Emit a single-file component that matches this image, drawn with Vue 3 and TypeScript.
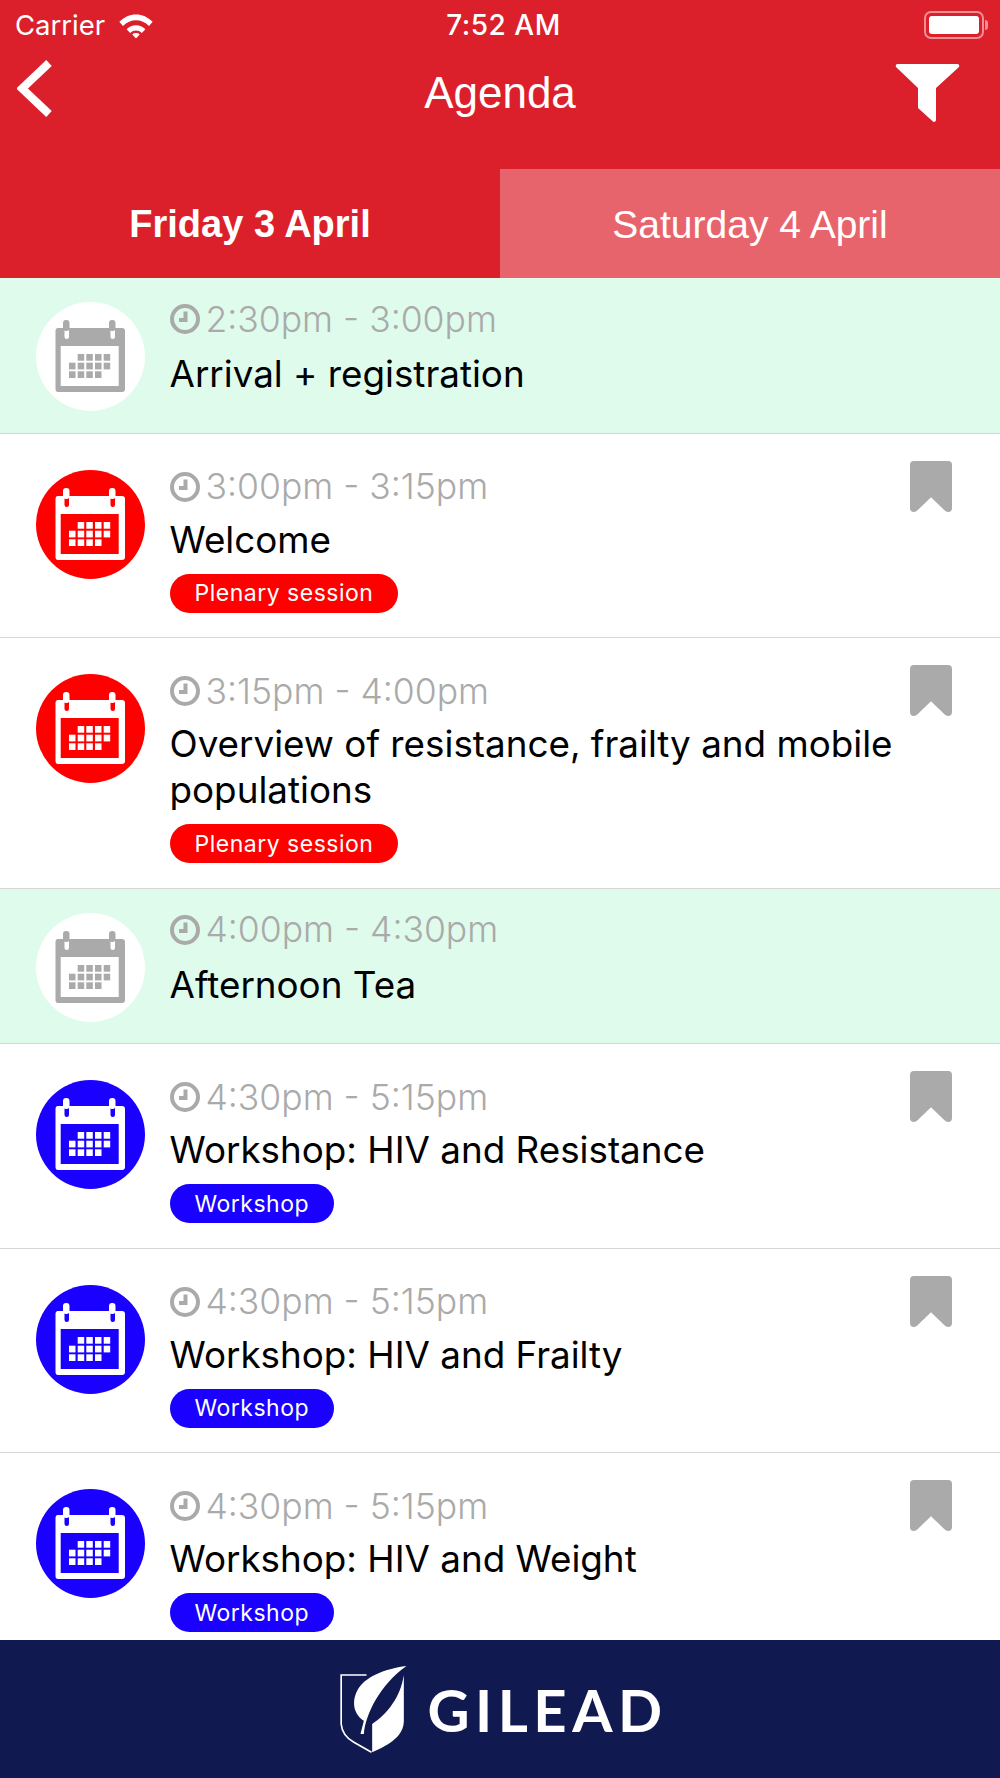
<template>
  <div class="screen">
    <header class="header">
      <div class="status">
        <div class="status-left">
          <span>Carrier</span>
          <svg class="wifi" viewBox="0 0 34 24">
            <path d="M1 8.500C10 -1 24 -1 33 8.500L29.500 12.500C22.500 5 11.500 5 4.500 12.500Z" />
            <path d="M8 15.500C13 10.500 21 10.500 26 15.500L22.600 19.200C19.400 16 14.600 16 11.400 19.200Z" />
            <path d="M13.400 20.500C15.400 18.800 18.600 18.800 20.600 20.500L17 24.500Z" />
          </svg>
        </div>
        <div class="status-time">7:52 AM</div>
        <div class="status-right">
          <div class="battery"><div class="battery-fill"></div></div>
          <div class="battery-tip"></div>
        </div>
      </div>
      <div class="nav">
        <svg class="back" viewBox="0 0 36 57">
          <path d="M32 3L5 28.500L32 54" />
        </svg>
        <div class="nav-title">Agenda</div>
        <svg class="filter" viewBox="0 0 65 58">
          <path d="M1 3Q0 0 3 0H62Q65 0 64 3L41 24V56Q41 58 38.500 58L23 44V24Z" />
        </svg>
      </div>
      <div class="tabs">
        <div class="tab active">Friday 3 April</div>
        <div class="tab">Saturday 4 April</div>
      </div>
    </header>

    <div class="list">
      <div
        v-for="(item, i) in items"
        :key="i"
        class="row"
        :class="{ green: item.kind === 'break' }"
      >
        <div class="circle" :class="item.kind">
          <svg viewBox="0 0 109 109" class="calendar">
            <path class="cal-body" d="M22 26H86Q89 26 89 29V87Q89 90 86 90H22Q19.500 90 19.500 87V29Q19.500 26 22 26Z" />
            <rect class="cal-inner" x="24.700" y="44" width="58" height="40" />
            <rect class="cal-notch" x="28.500" y="24" width="4.500" height="13" rx="2.200" />
            <rect class="cal-notch" x="74.500" y="24" width="4.500" height="13" rx="2.200" />
            <rect class="cal-body" x="27" y="18" width="6.500" height="11" rx="3" />
            <rect class="cal-body" x="73" y="18" width="6.500" height="11" rx="3" />
            <rect
              v-for="c in cells"
              :key="c.x + '-' + c.y"
              class="cal-cell"
              :x="c.x"
              :y="c.y"
              width="6.500"
              height="6.700"
            />
          </svg>
        </div>
        <div class="info">
          <div class="time">
            <svg class="clock" viewBox="0 0 30 30">
              <circle cx="15" cy="15" r="13" />
              <path d="M15.500 7.500V16H9" />
            </svg>
            <span>{{ item.time }}</span>
          </div>
          <div class="title">{{ item.title }}</div>
          <div v-if="item.tag" class="tag" :class="item.kind">{{ item.tag }}</div>
        </div>
        <svg v-if="item.kind !== 'break'" class="bookmark" viewBox="0 0 43 52">
          <path d="M4 0H39Q43 0 43 4V48Q43 52 39 52Q37 52 35 50L21.500 37L8 50Q6 52 4 52Q0 52 0 48V4Q0 0 4 0Z" />
        </svg>
      </div>
    </div>

    <footer class="footer">
      <svg class="shield" viewBox="110 70 215 270">
        <path class="shield-line" d="M198 103H122V250Q125 285 160 305L213 335" />
        <path class="shield-fill" d="M318 76C250 85 190 110 170 150C150 190 165 225 190 240L180 280L190 280C195 220 240 130 318 76Z" />
        <path class="shield-fill" d="M310 103C300 170 260 220 215 250V335C270 310 310 285 310 240Z" />
      </svg>
      <span class="wordmark">GILEAD</span>
    </footer>
  </div>
</template>

<script setup lang="ts">
type Kind = 'break' | 'plenary' | 'workshop';

interface AgendaItem {
  time: string;
  title: string;
  kind: Kind;
  tag?: string;
}

const items: AgendaItem[] = [
  { time: '2:30pm - 3:00pm', title: 'Arrival + registration', kind: 'break' },
  { time: '3:00pm - 3:15pm', title: 'Welcome', kind: 'plenary', tag: 'Plenary session' },
  {
    time: '3:15pm - 4:00pm',
    title: 'Overview of resistance, frailty and mobile populations',
    kind: 'plenary',
    tag: 'Plenary session',
  },
  { time: '4:00pm - 4:30pm', title: 'Afternoon Tea', kind: 'break' },
  { time: '4:30pm - 5:15pm', title: 'Workshop: HIV and Resistance', kind: 'workshop', tag: 'Workshop' },
  { time: '4:30pm - 5:15pm', title: 'Workshop: HIV and Frailty', kind: 'workshop', tag: 'Workshop' },
  { time: '4:30pm - 5:15pm', title: 'Workshop: HIV and Weight', kind: 'workshop', tag: 'Workshop' },
];

// calendar day squares: 3 rows, first row starts one column in, last row ends one early
const cols = [33, 41.7, 50.3, 59, 67.7];
const rows = [52, 60.7, 69.3];
const cells = rows.flatMap((y, r) =>
  cols
    .filter((_, c) => !(r === 0 && c === 0) && !(r === 2 && c === 4))
    .map((x) => ({ x, y })),
);
</script>

<style>
html,
body {
  margin: 0;
  background: #fff;
}
</style>

<style scoped>
.screen {
  display: flex;
  flex-direction: column;
  width: 1000px;
  height: 1778px;
  overflow: hidden;
  font-family: Inter, "Liberation Sans", sans-serif;
}

/* header */
.header {
  flex: none;
  background: #dc202b;
  color: #fff;
  font-family: "Liberation Sans", Arial, sans-serif;
}
.status {
  display: flex;
  align-items: center;
  justify-content: space-between;
  height: 50px;
  padding: 0 12px 0 15px;
  font-family: Inter, "Liberation Sans", sans-serif;
  font-size: 27.5px;
}
.status-left {
  display: flex;
  align-items: center;
  flex: 1;
  gap: 13px;
}
.wifi {
  width: 36px;
  height: 25px;
  fill: #fff;
}
.status-time {
  font-size: 28px;
  font-weight: 500;
  letter-spacing: 0.5px;
  margin-left: 4px;
}
.status-right {
  display: flex;
  align-items: center;
  justify-content: flex-end;
  flex: 1;
}
.battery {
  box-sizing: border-box;
  width: 60px;
  height: 28px;
  padding: 3px;
  border: 2px solid #ee8f94;
  border-radius: 7px;
}
.battery-fill {
  height: 100%;
  border-radius: 3px;
  background: #fff;
}
.battery-tip {
  width: 3px;
  height: 10px;
  margin-left: 1px;
  border-radius: 0 3px 3px 0;
  background: #ee8f94;
}
.nav {
  display: flex;
  align-items: flex-start;
  height: 119px;
  padding: 10px 40px 0 17px;
  box-sizing: border-box;
}
.back {
  flex: none;
  width: 36px;
  height: 57px;
  fill: none;
  stroke: #fff;
  stroke-width: 8;
}
.nav-title {
  flex: 1;
  padding: 8px 0 0 52px;
  font-size: 44px;
  line-height: 50px;
  text-align: center;
}
.filter {
  flex: none;
  width: 65px;
  height: 58px;
  margin-top: 4px;
  fill: #fff;
}
.tabs {
  display: flex;
  height: 109px;
}
.tab {
  flex: 1;
  display: flex;
  align-items: center;
  justify-content: center;
  padding-top: 2px;
  font-size: 39px;
  background: #e8646c;
}
.tab.active {
  font-size: 38px;
  font-weight: 700;
  background: #dc202b;
}

/* agenda list */
.list {
  flex: 1;
  min-height: 0;
  overflow: hidden;
}
.row {
  display: flex;
  align-items: flex-start;
  padding: 33px 48px 24.5px 36px;
  border-bottom: 1px solid #d6d6d6;
  background: #fff;
}
.row.green {
  padding-top: 24px;
  padding-bottom: 21.5px;
  background: #dffbec;
}
.row.green .info {
  margin-top: -3px;
}
.row.green .circle {
  margin-top: 0;
}
.circle {
  flex: none;
  width: 109px;
  height: 109px;
  margin-top: 3px;
  border-radius: 50%;
}
.circle.break {
  background: #fff;
}
.circle.plenary {
  background: #ff0000;
}
.circle.workshop {
  background: #1900ff;
}
.calendar {
  display: block;
  width: 109px;
  height: 109px;
}
.cal-body {
  fill: #fff;
}
.cal-inner,
.cal-notch {
  fill: #ff0000;
}
.cal-cell {
  fill: #fff;
}
.workshop .cal-inner,
.workshop .cal-notch {
  fill: #1900ff;
}
.break .cal-body,
.break .cal-cell {
  fill: #aaa;
}
.break .cal-inner,
.break .cal-notch {
  fill: #fff;
}
.info {
  flex: 1;
  min-width: 0;
  padding-left: 24.5px;
}
.time {
  display: flex;
  align-items: center;
  gap: 6px;
  height: 40px;
  color: #aaa;
  font-size: 35.5px;
  font-weight: 300;
}
.clock {
  flex: none;
  width: 30px;
  height: 30px;
  fill: none;
  stroke: #aaa;
  stroke-width: 4;
}
.title {
  margin-top: 12px;
  color: #000;
  font-size: 36.8px;
  line-height: 46px;
}
.row:not(.green) .title {
  margin-top: 10px;
}
.tag {
  display: flex;
  align-items: center;
  width: max-content;
  height: 39px;
  margin-top: 11px;
  padding: 0 25px;
  border-radius: 20px;
  color: #fff;
  font-size: 23px;
  letter-spacing: 0.5px;
}
.tag.plenary {
  background: #ff0000;
}
.tag.workshop {
  background: #1900ff;
}
.bookmark {
  flex: none;
  width: 42px;
  height: 51px;
  margin-top: -6px;
  fill: #aaa;
}

/* sponsor footer */
.footer {
  flex: none;
  display: flex;
  align-items: center;
  justify-content: center;
  gap: 18px;
  height: 138px;
  padding-left: 5px;
  background: #111a50;
  color: #fff;
}
.shield {
  width: 72px;
  height: 90px;
}
.shield-line {
  fill: none;
  stroke: #fff;
  stroke-width: 5;
}
.shield-fill {
  fill: #fff;
}
.wordmark {
  font-family: Lato, "Open Sans", sans-serif;
  font-size: 58px;
  font-weight: 700;
  letter-spacing: 5.5px;
}
</style>
